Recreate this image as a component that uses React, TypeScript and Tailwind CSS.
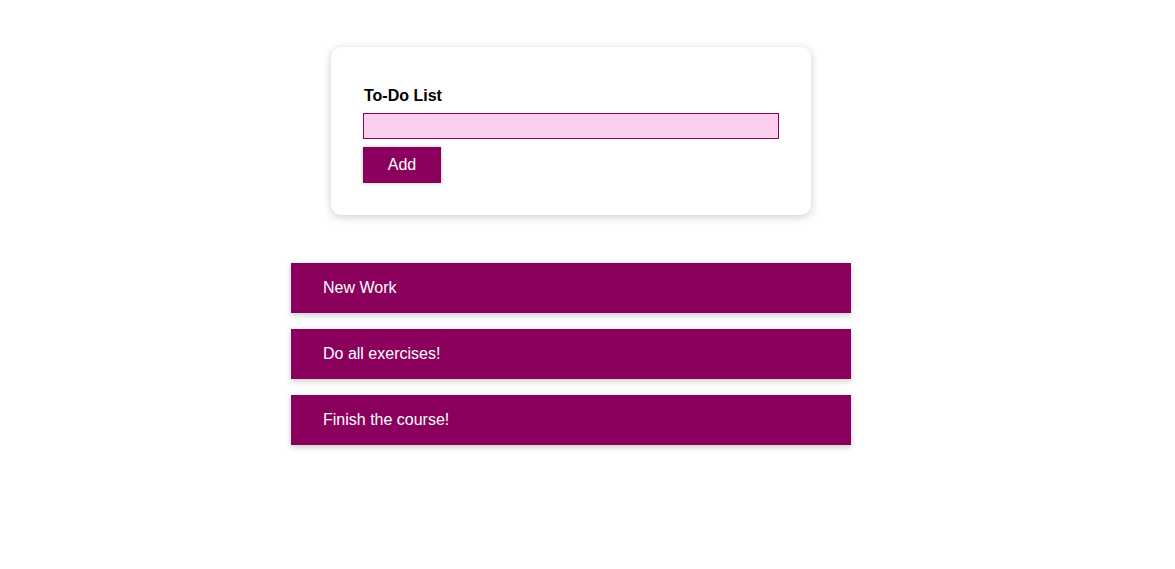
import React from "react";

export default function App() {
  const items = ["New Work", "Do all exercises!", "Finish the course!"];
  return (
    <div className="w-[1142px] bg-white pt-[47px] font-['Liberation_Sans',Arial,sans-serif] min-h-[569px]">
      <section className="mx-auto w-[480px] rounded-[10px] bg-white p-8 shadow-[0_2px_10px_rgba(0,0,0,0.2)]">
        <div className="my-2">
          <label className="mb-2 block pl-px text-base font-bold leading-[18px] text-black">To-Do List</label>
          <input
            type="text"
            className="block h-[26px] w-full border border-[#8b005d] bg-[#fad0ec] outline-none"
          />
        </div>
        <button className="h-9 w-[78px] bg-[#8b005d] text-base text-white shadow-[0_0_4px_rgba(0,0,0,0.26)]">
          Add
        </button>
      </section>
      <ul className="mx-auto mt-12 flex w-[560px] flex-col gap-4">
        {items.map((t) => (
          <li
            key={t}
            className="flex h-[50px] items-center bg-[#8b005d] pl-8 text-base text-white shadow-[0_2px_6px_rgba(0,0,0,0.22)]"
          >
            {t}
          </li>
        ))}
      </ul>
    </div>
  );
}
